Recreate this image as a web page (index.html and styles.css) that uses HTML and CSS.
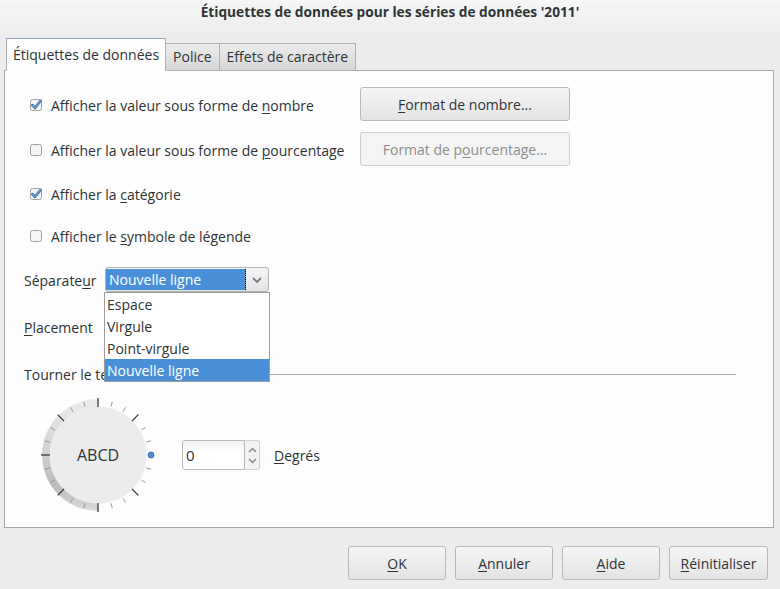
FILE: index.html
```html
<!DOCTYPE html>
<html lang="fr">
<head>
  <meta charset="UTF-8">
  <title>Étiquettes de données</title>
  <link rel="stylesheet" href="styles.css">
</head>
<body>

  <div class="titlebar">Étiquettes de données pour les séries de données '2011'</div>

  <div class="tabs">
    <div class="tab active">Étiquettes de données</div>
    <div class="tab">Police</div>
    <div class="tab">Effets de caractère</div>
  </div>

  <div class="panel">
    <div class="row row-btn">
      <label class="check">
        <svg class="box" width="12" height="12" viewBox="0 0 12 12"><rect x="0.5" y="0.5" width="11" height="11" rx="2" fill="#f4f4f4" stroke="#a3a3a3"/><path d="M2.5 6.2 L5 8.8 L10.5 2" fill="none" stroke="#2d5d9a" stroke-width="2.6" stroke-linecap="round"/><path d="M2.5 6.2 L5 8.8 L10.5 2" fill="none" stroke="#6fa3e0" stroke-width="1.3" stroke-linecap="round"/></svg>
        <span>Afficher la valeur sous forme de <u>n</u>ombre</span>
      </label>
      <button class="btn wide"><u>F</u>ormat de nombre...</button>
    </div>

    <div class="row row-btn">
      <label class="check">
        <svg class="box" width="12" height="12" viewBox="0 0 12 12"><rect x="0.5" y="0.5" width="11" height="11" rx="2" fill="#f4f4f4" stroke="#a3a3a3"/></svg>
        <span>Afficher la valeur sous forme de <u>p</u>ourcentage</span>
      </label>
      <button class="btn wide disabled">Format de p<u>o</u>urcentage...</button>
    </div>

    <div class="row row-check first">
      <label class="check">
        <svg class="box" width="12" height="12" viewBox="0 0 12 12"><rect x="0.5" y="0.5" width="11" height="11" rx="2" fill="#f4f4f4" stroke="#a3a3a3"/><path d="M2.5 6.2 L5 8.8 L10.5 2" fill="none" stroke="#2d5d9a" stroke-width="2.6" stroke-linecap="round"/><path d="M2.5 6.2 L5 8.8 L10.5 2" fill="none" stroke="#6fa3e0" stroke-width="1.3" stroke-linecap="round"/></svg>
        <span>Afficher la <u>c</u>atégorie</span>
      </label>
    </div>

    <div class="row row-check">
      <label class="check">
        <svg class="box" width="12" height="12" viewBox="0 0 12 12"><rect x="0.5" y="0.5" width="11" height="11" rx="2" fill="#f4f4f4" stroke="#a3a3a3"/></svg>
        <span>Afficher le <u>s</u>ymbole de légende</span>
      </label>
    </div>

    <div class="field sep-row">
      <span class="field-label">Séparate<u>u</u>r</span>
      <div class="combo">
        <div class="combo-value">Nouvelle ligne</div>
        <div class="combo-arrow">
          <svg width="10" height="6" viewBox="0 0 10 6"><path d="M1 1 L5 5 L9 1" fill="none" stroke="#7a7a7a" stroke-width="1.8"/></svg>
        </div>
        <ul class="popup">
          <li>Espace</li>
          <li>Virgule</li>
          <li>Point-virgule</li>
          <li class="selected">Nouvelle ligne</li>
        </ul>
      </div>
    </div>

    <div class="field place-row">
      <span class="field-label"><u>P</u>lacement</span>
    </div>

    <div class="rotate-head">
      <span>Tourner le texte</span>
      <div class="rule"></div>
    </div>

    <div class="rotate">
      <svg class="dial" width="120" height="120" viewBox="0 0 120 120">
        <defs>
          <linearGradient id="ring" x1="0" y1="0" x2="0" y2="1">
            <stop offset="0" stop-color="#ececec"/>
            <stop offset="0.35" stop-color="#d9d9d9"/>
            <stop offset="0.55" stop-color="#cbcbcb"/>
            <stop offset="0.78" stop-color="#bcbcbc"/>
            <stop offset="1" stop-color="#dadada"/>
          </linearGradient>
        </defs>
        <path d="M60 4 A56 56 0 0 0 60 116 L60 108 A48 48 0 0 1 60 12 Z" fill="url(#ring)"/>
        <circle cx="60" cy="60" r="48.5" fill="#ececec"/>
        <g id="ticks"></g>
        <circle cx="113" cy="60" r="3" fill="#4a90d9" stroke="#2c5f9e" stroke-width="0.8"/>
        <text x="60" y="66" text-anchor="middle" class="dial-text">ABCD</text>
      </svg>
      <div class="spin">
        <div class="spin-entry">0</div>
        <div class="spin-btns">
          <svg width="9" height="6" viewBox="0 0 9 6"><path d="M1 5 L4.5 1.5 L8 5" fill="none" stroke="#8a8a8a" stroke-width="1.5"/></svg>
          <svg width="9" height="6" viewBox="0 0 9 6"><path d="M1 1 L4.5 4.5 L8 1" fill="none" stroke="#8a8a8a" stroke-width="1.5"/></svg>
        </div>
      </div>
      <span class="deg"><u>D</u>egrés</span>
    </div>
  </div>

  <div class="actions">
    <button class="btn"><u>O</u>K</button>
    <button class="btn"><u>A</u>nnuler</button>
    <button class="btn"><u>A</u>ide</button>
    <button class="btn"><u>R</u>éinitialiser</button>
  </div>

  <script>
    // dial ticks every 15 degrees, darker every 45
    const ticks = document.getElementById('ticks');
    for (let a = 15; a < 360; a += 15) {
      const rad = a * Math.PI / 180;
      const major = a % 45 === 0;
      const r1 = major ? 48 : 50;
      const r2 = major ? 57 : 55;
      const line = document.createElementNS('http://www.w3.org/2000/svg', 'line');
      line.setAttribute('x1', 60 + r1 * Math.cos(rad));
      line.setAttribute('y1', 60 - r1 * Math.sin(rad));
      line.setAttribute('x2', 60 + r2 * Math.cos(rad));
      line.setAttribute('y2', 60 - r2 * Math.sin(rad));
      line.setAttribute('stroke', major ? '#2e2e2e' : '#8c8c8c');
      line.setAttribute('stroke-width', major ? '1.2' : '0.9');
      ticks.appendChild(line);
    }
  </script>
</body>
</html>
```

FILE: styles.css
```css
body {
  margin: 0;
  width: 780px;
  height: 589px;
  background: #ededed;
  font-family: "Open Sans", sans-serif;
  font-size: 14px;
  color: #2e3436;
  overflow: hidden;
}
u {
  text-underline-offset: 2px;
}
.titlebar {
  height: 30px;
  padding-top: 3px;
  box-sizing: border-box;
  line-height: 18px;
  text-align: center;
  font-size: 13.7px;
  font-weight: bold;
  color: #2e3436;
  background: linear-gradient(#f7f7f7, #ededed);
}
.tabs {
  display: flex;
  align-items: flex-end;
  height: 33px;
  margin-top: 8px;
  margin-bottom: -1px;
  padding-left: 6px;
  position: relative;
  z-index: 1;
}
.tab {
  height: 28px;
  box-sizing: border-box;
  padding: 0 7px;
  line-height: 26px;
  border: 1px solid #b0b0b0;
  border-left: none;
  background: linear-gradient(#ececec, #d6d6d6);
}
.tab.active {
  height: 33px;
  line-height: 32px;
  padding: 0 6px;
  border-left: 1px solid #aaa;
  border-top-color: #8da4c4;
  border-bottom-color: #fdfdfd;
  background: #fdfdfd;
}
.panel {
  position: relative;
  height: 458px;
  box-sizing: border-box;
  margin: 0 6px 0 4px;
  padding: 16px 0 0 19px;
  border: 1px solid #a8a8a8;
  background: #fdfdfd;
}
.row {
  display: flex;
  align-items: center;
  margin-left: 6px;
}
.row-btn {
  height: 34px;
  margin-bottom: 11px;
}
.row-check {
  height: 42px;
}
.row-check.first {
  margin-top: -5px;
}
.check {
  display: flex;
  align-items: center;
  width: 330px;
  padding-top: 2px;
}
.box {
  margin-right: 9px;
}
.btn {
  height: 34px;
  width: 98px;
  box-sizing: border-box;
  border: 1px solid #b9b9b6;
  border-radius: 3px;
  background: linear-gradient(#f6f6f6, #e3e3e3);
  font-family: "Open Sans", sans-serif;
  font-size: 14px;
  color: #2e3436;
  padding: 0;
}
.btn.wide {
  width: 210px;
}
.btn.disabled {
  background: #f4f4f4;
  border-color: #cfcfcf;
  color: #8b8e8f;
}
.field {
  display: flex;
  align-items: center;
  height: 25px;
}
.sep-row {
  margin-top: 11px;
}
.place-row {
  margin-top: 20px;
  padding-top: 2px;
}
.field-label {
  width: 81px;
  padding-top: 2px;
}
.combo {
  position: relative;
  display: flex;
  width: 164px;
  height: 25px;
  box-sizing: border-box;
  border: 1px solid #b3b3b3;
  border-radius: 3px;
  background: linear-gradient(#f6f6f6, #e3e3e3);
}
.combo-value {
  flex: 1;
  margin: 1px 0;
  padding-left: 3px;
  line-height: 22px;
  background: #4a90d9;
  color: #fff;
  border-right: 1px dotted #000;
}
.combo-arrow {
  width: 22px;
  display: flex;
  align-items: center;
  justify-content: center;
}
.popup {
  position: absolute;
  top: 24px;
  left: -2px;
  width: 166px;
  margin: 0;
  padding: 0;
  list-style: none;
  box-sizing: border-box;
  border: 1px solid #9c9c9c;
  background: #fff;
  z-index: 2;
}
.popup li {
  height: 22px;
  line-height: 23px;
  padding-left: 2px;
}
.popup li.selected {
  background: #4a90d9;
  color: #fff;
}
.rotate-head {
  display: flex;
  align-items: center;
  height: 18px;
  margin-top: 26px;
  margin-right: 37px;
}
.rule {
  flex: 1;
  height: 1px;
  margin-left: 6px;
  background: #a8a8a8;
}
.rotate {
  display: flex;
  align-items: center;
  margin-top: 12px;
  margin-left: 14px;
}
.dial-text {
  font-family: "Open Sans", sans-serif;
  font-size: 16px;
  fill: #2e3436;
}
.spin {
  display: flex;
  margin-left: 24px;
  height: 30px;
}
.spin-entry {
  width: 63px;
  box-sizing: border-box;
  border: 1px solid #b8b8b8;
  border-radius: 3px 0 0 3px;
  background: linear-gradient(#f3f3f3, #fff 40%);
  padding-left: 3px;
  line-height: 28px;
  font-size: 15px;
}
.spin-btns {
  width: 15px;
  box-sizing: border-box;
  border: 1px solid #d0d0d0;
  border-left: none;
  border-radius: 0 3px 3px 0;
  background: #f3f3f3;
  display: flex;
  flex-direction: column;
  justify-content: space-around;
  align-items: center;
  padding: 3px 0;
}
.deg {
  margin-left: 14px;
}
.actions {
  display: flex;
  justify-content: flex-end;
  gap: 9px;
  margin-top: 18px;
  padding-right: 12px;
}
.actions .btn:last-child {
  width: 99px;
}
```
